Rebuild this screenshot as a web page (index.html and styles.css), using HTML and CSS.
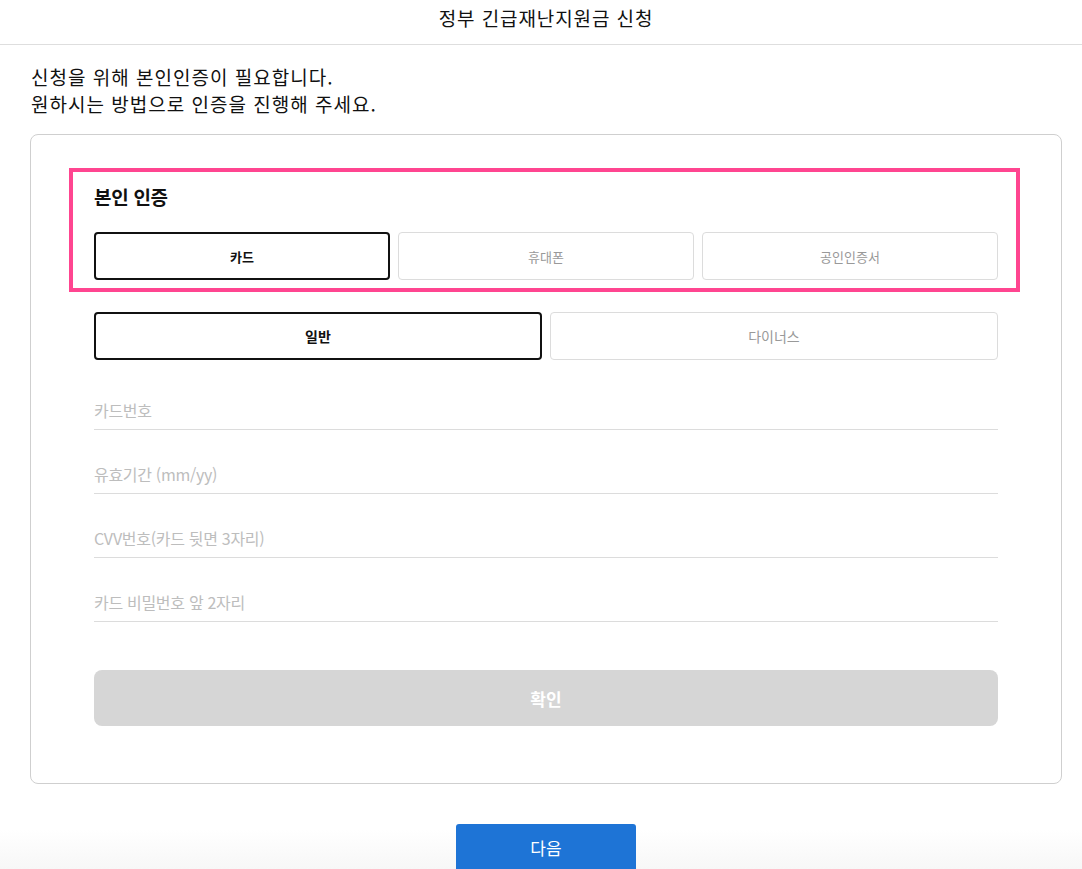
FILE: index.html
```html
<!DOCTYPE html>
<html lang="ko">
<head>
<meta charset="utf-8">
<title>정부 긴급재난지원금 신청</title>
<link rel="stylesheet" href="styles.css">
</head>
<body>
<header class="top">
  <h1 class="top-title">정부 긴급재난지원금 신청</h1>
</header>
<main class="page">
  <p class="intro">신청을 위해 본인인증이 필요합니다.<br>원하시는 방법으로 인증을 진행해 주세요.</p>
  <section class="card">
    <div class="auth-box">
      <h2 class="auth-title">본인 인증</h2>
      <div class="tabs tabs-3">
        <button class="tab tab-on">카드</button>
        <button class="tab">휴대폰</button>
        <button class="tab">공인인증서</button>
      </div>
    </div>
    <div class="tabs tabs-2">
      <button class="tab tab-on tab-lg">일반</button>
      <button class="tab tab-lg">다이너스</button>
    </div>
    <div class="fields">
      <input class="field" type="text" placeholder="카드번호">
      <input class="field" type="text" placeholder="유효기간 (mm/yy)">
      <input class="field" type="text" placeholder="CVV번호(카드 뒷면 3자리)">
      <input class="field" type="text" placeholder="카드 비밀번호 앞 2자리">
    </div>
    <button class="confirm">확인</button>
  </section>
</main>
<footer class="bottom">
  <button class="next">다음</button>
</footer>
</body>
</html>
```

FILE: styles.css
```css
* { box-sizing: border-box; }
html, body { margin: 0; padding: 0; background: #fff; }
body {
  font-family: "Noto Sans CJK KR", "Noto Sans", sans-serif;
  color: #111;
  height: 869px;
  overflow: hidden;
}
.top {
  height: 45px;
  border-bottom: 1px solid #dedede;
  display: flex;
  align-items: center;
  justify-content: center;
  padding-left: 10px;
}
.top-title {
  margin: 0;
  font-size: 19px;
  font-weight: 400;
  line-height: 26px;
  margin-top: -8px;
  color: #111;
  letter-spacing: 0.9px;
}
.page {
  padding: 0 20px 0 30px;
}
.intro {
  margin: 18px 0 17px 1px;
  font-size: 19px;
  line-height: 27px;
  letter-spacing: 1px;
  color: #111;
}
.card {
  border: 1px solid #cfcfcf;
  border-radius: 8px;
  padding: 33px 63px 57px 63px;
}
.auth-box {
  border: 4px solid #ff4590;
  margin: 0 -22px 0 -25px;
  padding: 12px 18px 8px 21px;
}
.auth-title {
  margin: 0;
  font-size: 19px;
  font-weight: 700;
  line-height: 26px;
  letter-spacing: -0.3px;
}
.tabs {
  display: grid;
  gap: 8px;
}
.tabs-3 {
  grid-template-columns: repeat(3, 1fr);
  margin-top: 22px;
}
.tabs-2 {
  grid-template-columns: repeat(2, 1fr);
  margin-top: 20px;
}
.tab {
  height: 48px;
  border: 1px solid #dcdcdc;
  border-radius: 4px;
  background: #fff;
  font-family: inherit;
  font-size: 13px;
  color: #999;
  padding: 0;
}
.tab-lg { font-size: 14px; }
.tab-on {
  border: 2px solid #111;
  color: #111;
  font-weight: 700;
}
.fields {
  display: flex;
  flex-direction: column;
  gap: 24px;
  margin-top: 30px;
}
.field {
  height: 40px;
  border: 0;
  border-bottom: 1px solid #dcdcdc;
  padding: 0;
  font-family: inherit;
  font-size: 16px;
  color: #333;
  outline: none;
  background: transparent;
}
.field::placeholder { color: #bdbdbd; letter-spacing: -0.3px; }
.confirm {
  display: block;
  width: 100%;
  height: 56px;
  margin-top: 48px;
  border: 0;
  border-radius: 8px;
  background: #d6d6d6;
  color: #fff;
  font-family: inherit;
  font-size: 17px;
  font-weight: 700;
}
.bottom {
  margin-top: 40px;
  height: 45px;
  display: flex;
  justify-content: center;
  padding-left: 10px;
  background: linear-gradient(to bottom, #fff 0, #fff 6px, #f7f7f7 45px);
}
.next {
  width: 180px;
  height: 56px;
  border: 0;
  border-radius: 3px 3px 0 0;
  background: #1e74d6;
  color: #fff;
  font-family: inherit;
  font-size: 17px;
  padding: 0 0 10px;
  align-self: flex-start;
}
```
